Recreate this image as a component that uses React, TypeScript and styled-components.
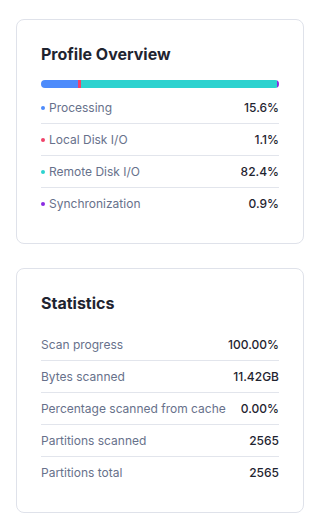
import React from "react";
import styled, { createGlobalStyle } from "styled-components";

const Global = createGlobalStyle`
  * { box-sizing: border-box; }
  body { margin: 0; background: #ffffff; font-family: Inter, "Noto Sans", sans-serif; -webkit-font-smoothing: antialiased; }
`;

const Page = styled.div`
  display: flex;
  flex-direction: column;
  gap: 24px;
  padding: 19px 16px 0 16px;
`;

const Card = styled.section`
  border: 1px solid #dfe2ea;
  border-radius: 8px;
  padding: 24px;
  background: #fff;
  display: flex;
  flex-direction: column;
`;

const Title = styled.h2`
  margin: 0 0 16px 0;
  font-size: 16px;
  line-height: 20px;
  font-weight: 700;
  color: #1f2430;
`;

const Bar = styled.div`
  display: flex;
  height: 8px;
  border-radius: 4px;
  overflow: hidden;
  margin-bottom: 4px;
`;

const Segment = styled.div<{ $color: string }>`
  background: ${(p) => p.$color};
  height: 100%;
`;

const List = styled.div`
  display: flex;
  flex-direction: column;
`;

const Row = styled.div`
  display: flex;
  align-items: center;
  justify-content: space-between;
  height: 32px;
  font-size: 12px;
  white-space: nowrap;
  border-bottom: 1px solid #e2e5ec;
  &:last-child { border-bottom: none; height: 31px; }
`;

const Label = styled.span`
  display: flex;
  align-items: center;
  gap: 4px;
  color: #67718b;
`;

const Dot = styled.span<{ $color: string }>`
  width: 4px;
  height: 4px;
  border-radius: 50%;
  background: ${(p) => p.$color};
  display: inline-block;
`;

const Value = styled.span`
  color: #1f2430;
  font-weight: 500;
`;

const segments = [
  { label: "Processing", value: 15.6, color: "#4d8bfb" },
  { label: "Local Disk I/O", value: 1.1, color: "#f0436a" },
  { label: "Remote Disk I/O", value: 82.4, color: "#2dd2cf" },
  { label: "Synchronization", value: 0.9, color: "#8b2be2" },
];

const stats = [
  ["Scan progress", "100.00%"],
  ["Bytes scanned", "11.42GB"],
  ["Percentage scanned from cache", "0.00%"],
  ["Partitions scanned", "2565"],
  ["Partitions total", "2565"],
];

export default function App() {
  return (
    <>
      <Global />
      <Page>
        <Card>
          <Title>Profile Overview</Title>
          <Bar>
            {segments.map((s) => (
              <Segment key={s.label} $color={s.color} style={{ width: `${s.value}%` }} />
            ))}
          </Bar>
          <List>
            {segments.map((s) => (
              <Row key={s.label}>
                <Label>
                  <Dot $color={s.color} />
                  {s.label}
                </Label>
                <Value>{s.value.toFixed(1)}%</Value>
              </Row>
            ))}
          </List>
        </Card>
        <Card>
          <Title>Statistics</Title>
          <List>
            {stats.map(([k, v]) => (
              <Row key={k}>
                <Label>{k}</Label>
                <Value>{v}</Value>
              </Row>
            ))}
          </List>
        </Card>
      </Page>
    </>
  );
}
